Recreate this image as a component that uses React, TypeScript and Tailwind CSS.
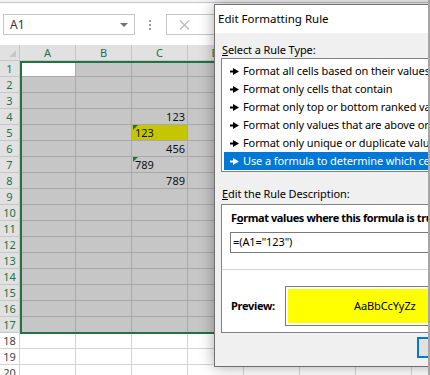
import React from "react";

const COLS = ["A", "B", "C", "D", "E", "F", "G", "H"];

type CellData = { text: string; align: "left" | "right"; err?: boolean; fill?: boolean };

const DATA: Record<string, CellData> = {
  "4C": { text: "123", align: "right" },
  "5C": { text: "123", align: "left", err: true, fill: true },
  "6C": { text: "456", align: "right" },
  "7C": { text: "789", align: "left", err: true },
  "8C": { text: "789", align: "right" },
};

function ErrMark() {
  return (
    <svg width="5" height="5" viewBox="0 0 5 5" className="absolute left-[1px] top-0">
      <path d="M0 0 H5 L0 5 Z" fill="#1e7145" />
    </svg>
  );
}

function Cell({ row, col }: { row: number; col: string }) {
  const sel = row <= 17;
  const active = row === 1 && col === "A";
  const d = DATA[`${row}${col}`];
  let cls = "bg-white border-[#d4d4d4]";
  if (sel && !active) cls = "bg-[#c6c6c6] border-[#a9a9a9]";
  if (sel && active) cls = "bg-white border-[#a9a9a9]";
  if (d && d.fill) cls = "bg-[#c6c600] border-[#a9a9a9]";
  return (
    <div
      className={`relative w-[56px] shrink-0 h-full border-r border-b ${cls} flex items-center ${
        d && d.align === "right" ? "justify-end pr-[2px]" : "justify-start pl-[3px]"
      }`}
    >
      {d && d.err ? <ErrMark /> : null}
      {d ? <span className="text-[11px] leading-none text-[#111]">{d.text}</span> : null}
    </div>
  );
}

function Row({ n }: { n: number }) {
  const sel = n <= 17;
  return (
    <div className="flex h-[16px]">
      <div
        className={`w-[20px] shrink-0 h-full flex items-center justify-center border-b border-r text-[11px] leading-none ${
          sel ? "bg-[#e1e1e1] text-[#217346] border-[#c6c6c6]" : "bg-white text-[#444444] border-[#d4d4d4]"
        }`}
      >
        {n}
      </div>
      {COLS.map((c) => (
        <Cell key={c} row={n} col={c} />
      ))}
    </div>
  );
}

function Arrow({ white }: { white?: boolean }) {
  const c = white ? "#ffffff" : "#000000";
  return (
    <svg width="9" height="7" viewBox="0 0 9 7" className="shrink-0">
      <rect x="0" y="2.5" width="4" height="2" fill={c} />
      <path d="M3 0 L9 3.5 L3 7 Z" fill={c} />
    </svg>
  );
}

const RULES = [
  "Format all cells based on their values",
  "Format only cells that contain",
  "Format only top or bottom ranked values",
  "Format only values that are above or below average",
  "Format only unique or duplicate values",
  "Use a formula to determine which cells to format",
];

export default function App() {
  const rows = Array.from({ length: 20 }, (_, i) => i + 1);
  return (
    <div
      className="relative w-[430px] h-[375px] overflow-hidden bg-white"
      style={{ fontFamily: '"Noto Sans", "Open Sans", sans-serif' }}
    >
      {/* top strip */}
      <div className="h-[2px] bg-[#f3f3f3]" />
      <div className="h-[1px] bg-[#c6c6c6]" />

      {/* formula bar */}
      <div className="h-[42px] flex items-start pt-[11px] pl-[3px]">
        <div className="w-[132px] h-[21px] shrink-0 border border-[#c6c6c6] flex items-center justify-between pl-[6px] pr-[6px]">
          <span className="text-[12px] leading-none text-[#333333]">A1</span>
          <svg width="8" height="4" viewBox="0 0 8 4">
            <path d="M0 0 H8 L4 4 Z" fill="#707070" />
          </svg>
        </div>
        <div className="w-[31px] h-[21px] shrink-0 flex flex-col items-center justify-center gap-[2px] pr-[2px]">
          <div className="w-[2px] h-[2px] bg-[#9a9a9a]" />
          <div className="w-[2px] h-[2px] bg-[#9a9a9a]" />
          <div className="w-[2px] h-[2px] bg-[#9a9a9a]" />
        </div>
        <div className="flex-1 h-[21px] border border-[#c6c6c6] flex items-center pl-[12px]">
          <svg width="11" height="10" viewBox="0 0 11 10">
            <path d="M1 0.5 L10 9.5 M10 0.5 L1 9.5" stroke="#bcbcbc" strokeWidth="1.4" />
          </svg>
        </div>
      </div>

      {/* column headers */}
      <div className="flex h-[16px]">
        <div className="w-[20px] shrink-0 h-full bg-[#e1e1e1] border-r border-b border-[#c6c6c6] flex items-end justify-end pr-[3px] pb-[3px]">
          <svg width="7" height="7" viewBox="0 0 7 7">
            <path d="M7 0 V7 H0 Z" fill="#c8c8c8" />
          </svg>
        </div>
        {COLS.map((c) => (
          <div
            key={c}
            className="w-[56px] shrink-0 h-full bg-[#e1e1e1] border-r border-b border-[#c6c6c6] flex items-center justify-center text-[11px] leading-none text-[#217346]"
          >
            {c}
          </div>
        ))}
      </div>

      {/* rows */}
      {rows.map((n) => (
        <Row key={n} n={n} />
      ))}

      {/* selection border */}
      <div className="absolute left-[20px] top-[61px] w-[500px] h-[273px] border-2 border-[#217346] pointer-events-none" />

      {/* dialog */}
      <div className="absolute left-[214px] top-[4px] w-[240px] h-[363px] border border-[#707070] bg-[#f0f0f0] shadow-[0_0_14px_rgba(0,0,0,0.35)] flex flex-col">
        <div className="h-[28px] bg-white flex items-center pl-[3px] text-[11.5px] text-black">
          Edit Formatting Rule
        </div>
        <div className="flex flex-col pl-[6px] text-[11px] tracking-[-0.1px] text-black">
          <div className="h-[16px] mt-[9px] flex items-center pl-[1px]">
            <span>
              <span className="underline">S</span>elect a Rule Type:
            </span>
          </div>
          <div className="h-[114px] border border-[#828282] bg-white pt-[3px] pl-[2px] flex flex-col">
            {RULES.map((r, i) => (
              <div
                key={r}
                className={`h-[18px] shrink-0 flex items-center gap-[4px] pl-[6px] whitespace-nowrap ${
                  i === 5 ? "bg-[#0078d7] text-white" : "text-black"
                }`}
              >
                <Arrow white={i === 5} />
                <span>{r}</span>
              </div>
            ))}
          </div>
          <div className="h-[16px] mt-[14px] flex items-center pl-[1px]">
            <span>
              <span className="underline">E</span>dit the Rule Description:
            </span>
          </div>
          <div className="mt-[2px] h-[129px] border border-[#828282] bg-white flex flex-col">
            <div className="h-[16px] mt-[5px] pl-[9px] flex items-center font-bold tracking-[-0.4px] whitespace-nowrap">
              <span>
                F<span className="underline">o</span>rmat values where this formula is true:
              </span>
            </div>
            <div className="ml-[8px] mt-[6px] h-[21px] border border-[#7a7a7a] flex items-center pl-[2px] whitespace-nowrap">
              =(A1="123")
            </div>
            <div className="mt-[16px] h-[1px] bg-[#d5d5d5]" />
            <div className="mt-[16px] flex items-center">
              <div className="w-[63px] shrink-0 pl-[9px] font-bold tracking-[-0.3px]">Preview:</div>
              <div className="flex-1 h-[40px] border border-[#7a7a7a] p-[2px]">
                <div className="h-full bg-[#ffff00] flex items-center pl-[66px] whitespace-nowrap">
                  AaBbCcYyZz
                </div>
              </div>
            </div>
          </div>
          <div className="mt-[4px] ml-[196px] w-[40px] h-[21px] border-2 border-[#0078d7] bg-[#e1e1e1]" />
        </div>
      </div>

      {/* right edge strip */}
      <div className="absolute right-0 top-0 bottom-0 w-[2px] bg-[#a6a6a6]" />
    </div>
  );
}
